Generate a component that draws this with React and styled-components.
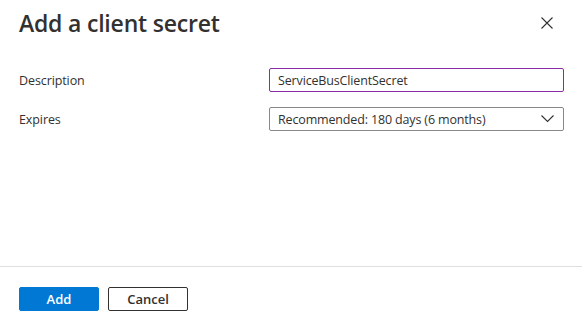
import React from 'react'
import styled, { createGlobalStyle } from 'styled-components'

const Global = createGlobalStyle`
  html, body {
    margin: 0;
    padding: 0;
    background: #ffffff;
  }
  * { box-sizing: border-box; }
`

const Panel = styled.div`
  width: 582px;
  height: 330px;
  display: flex;
  flex-direction: column;
  font-family: 'Open Sans', 'Noto Sans', sans-serif;
  color: #323130;
  background: #fff;
`

const Header = styled.div`
  display: flex;
  align-items: center;
  justify-content: space-between;
  padding: 0 23px 0 19px;
  height: 46px;
`

const Title = styled.h1`
  margin: 0;
  font-size: 23px;
  font-weight: 600;
  color: #323130;
  letter-spacing: -0.2px;
`

const CloseButton = styled.button`
  border: none;
  background: none;
  padding: 0;
  width: 24px;
  height: 24px;
  display: flex;
  align-items: center;
  justify-content: center;
  cursor: pointer;
`

const Body = styled.div`
  flex: 1;
  display: flex;
  flex-direction: column;
  gap: 15px;
  padding: 22px 18px 0 19px;
`

const Row = styled.div`
  display: grid;
  grid-template-columns: 250px 1fr;
  align-items: center;
`

const Label = styled.label`
  font-size: 12.5px;
  letter-spacing: -0.1px;
  color: #323130;
`

const Field = styled.div`
  height: 24px;
  display: flex;
  align-items: center;
  justify-content: space-between;
  padding: 0 9px 0 8px;
  border: 1px solid ${p => (p.focused ? '#8a2da5' : '#8a8886')};
  border-radius: 2px;
  font-size: 12.5px;
  letter-spacing: -0.15px;
  color: #323130;
  background: #fff;
`

const Footer = styled.div`
  border-top: 1px solid #e1dfdd;
  height: 64px;
  display: flex;
  align-items: flex-start;
  gap: 9px;
  padding: 20px 19px 0;
`

const Button = styled.button`
  width: 80px;
  height: 24px;
  border-radius: 2px;
  font-family: inherit;
  font-size: 13px;
  font-weight: 600;
  cursor: pointer;
  border: 1px solid ${p => (p.primary ? '#0078d4' : '#323130')};
  background: ${p => (p.primary ? '#0078d4' : '#ffffff')};
  color: ${p => (p.primary ? '#ffffff' : '#323130')};
`

export default function App () {
  return (
    <>
      <Global />
      <Panel>
        <Header>
          <Title>Add a client secret</Title>
          <CloseButton aria-label='Close'>
            <svg width='12' height='12' viewBox='0 0 12 12'>
              <path d='M0.5 0.5 L11.5 11.5 M11.5 0.5 L0.5 11.5' stroke='#323130' strokeWidth='1.1' fill='none' />
            </svg>
          </CloseButton>
        </Header>
        <Body>
          <Row>
            <Label>Description</Label>
            <Field focused>ServiceBusClientSecret</Field>
          </Row>
          <Row>
            <Label>Expires</Label>
            <Field>
              <span>Recommended: 180 days (6 months)</span>
              <svg width='13' height='8' viewBox='0 0 13 8'>
                <path d='M0.5 0.5 L6.5 6.5 L12.5 0.5' stroke='#323130' strokeWidth='1.1' fill='none' />
              </svg>
            </Field>
          </Row>
        </Body>
        <Footer>
          <Button primary>Add</Button>
          <Button>Cancel</Button>
        </Footer>
      </Panel>
    </>
  )
}
